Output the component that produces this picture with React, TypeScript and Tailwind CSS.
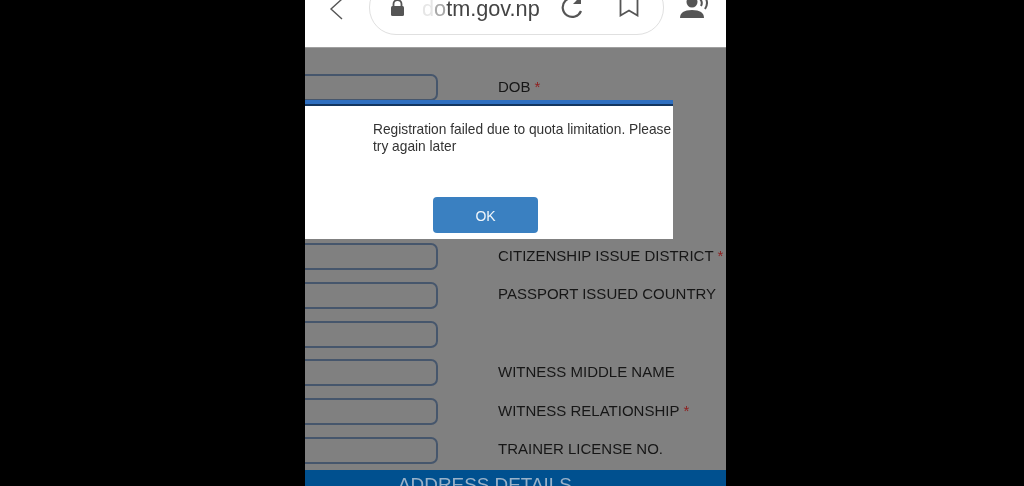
import React from "react";

const Row = ({ label, star }: { label?: string; star?: boolean }) => (
  <div className="flex h-[27px] items-center">
    <div className="h-[27px] w-[133px] shrink-0 rounded-r-[7px] border-2 border-l-0 border-[#46566c]" />
    <div className="ml-[60px] whitespace-nowrap pb-[3px] text-[15px] leading-none text-[#161616]">
      {label}
      {star && <span className="ml-[4px] text-[#8f1d1d]">*</span>}
    </div>
  </div>
);

export default function App() {
  return (
    <div className="flex h-[486px] w-[1024px] justify-center overflow-hidden bg-black font-['Liberation_Sans',Arial,sans-serif]">
      <div className="relative ml-[7px] flex h-[486px] w-[421px] flex-col overflow-hidden bg-[#808080] blur-[0.6px]">
        <header className="flex h-[48px] shrink-0 items-start border-b border-[#a0a0a0] bg-white">
          <svg width="16" height="22" viewBox="0 0 16 22" className="ml-[23px] mt-[-2px]" fill="none" stroke="#555" strokeWidth="1.4">
            <path d="M14 1 L3 11 L14 21" />
          </svg>
          <div className="ml-[25px] mt-[-20px] flex h-[55px] w-[295px] shrink-0 items-center rounded-[27px] border border-[#e0e0e0] pt-[17px]">
            <svg width="15" height="18" viewBox="0 0 15 18" className="ml-[20px] mt-[-16px]">
              <path d="M3.5 8V5a4 4 0 0 1 8 0v3" fill="none" stroke="#555" strokeWidth="1.8" />
              <rect x="1" y="7" width="13" height="10" rx="1.5" fill="#555" />
            </svg>
            <span className="ml-[17px] mt-[-14px] text-[21.7px] leading-[24px] text-[#444]">
              <span className="text-[#e6e6e6]">d</span>
              <span className="text-[#a8a8a8]">o</span>tm.gov.np
            </span>
            <svg width="24" height="24" viewBox="0 0 24 24" className="ml-[20px] mt-[-17px]" fill="none" stroke="#555" strokeWidth="2.2">
              <path d="M20 6 A9.5 9.5 0 1 0 21 15" />
              <path d="M21 0 V8 H13 Z" fill="#555" stroke="none" />
            </svg>
            <svg width="20" height="19" viewBox="0 0 20 19" className="ml-[35px] mt-[-17px]" fill="none" stroke="#555" strokeWidth="1.8">
              <path d="M1.5 -2 V17.5 L10 12.5 L18.5 17.5 V-2" />
            </svg>
          </div>
          <svg width="31" height="20" viewBox="0 0 31 20" className="ml-[16px] mt-[-1px]" fill="#555">
            <circle cx="12" cy="3" r="5.5" />
            <path d="M0 19 Q0 11 12 11 Q24 11 24 19 Z" />
            <path d="M20 0 Q23 3 21 7" fill="none" stroke="#555" strokeWidth="2" />
            <path d="M25 -2 Q29 4 25 10" fill="none" stroke="#555" strokeWidth="2" />
          </svg>
        </header>

        <main className="flex flex-1 flex-col pt-[26px]">
          <Row label="DOB" star />
          <div className="mt-[142px] flex flex-col gap-[11.8px]">
            <Row label="CITIZENSHIP ISSUE DISTRICT" star />
            <Row label="PASSPORT ISSUED COUNTRY" />
            <Row />
            <Row label="WITNESS MIDDLE NAME" />
            <Row label="WITNESS RELATIONSHIP" star />
            <Row label="TRAINER LICENSE NO." />
          </div>
          <div className="mt-[6px] h-[30px] whitespace-nowrap bg-[#00508f] pl-[93px] pt-[6px] text-[18.9px] font-normal leading-none text-[#9ab2c9]">
            ADDRESS DETAILS
          </div>
        </main>

        <div className="absolute left-0 top-[100px] flex h-[139px] w-[368px] flex-col bg-white">
          <div className="h-[6px] border-b-2 border-[#14365f] bg-[#2f6fc0]" />
          <p className="ml-[68px] mt-[15px] whitespace-nowrap text-[13.75px] leading-[17px] text-[#333]">
            Registration failed due to quota limitation. Please
            <br />
            try again later
          </p>
          <button className="ml-[128px] mt-[42px] h-[36px] w-[105px] rounded-[4px] bg-[#3a80c1] pt-[2px] text-[14px] text-[#f0f6fb]">
            OK
          </button>
        </div>
      </div>
    </div>
  );
}
